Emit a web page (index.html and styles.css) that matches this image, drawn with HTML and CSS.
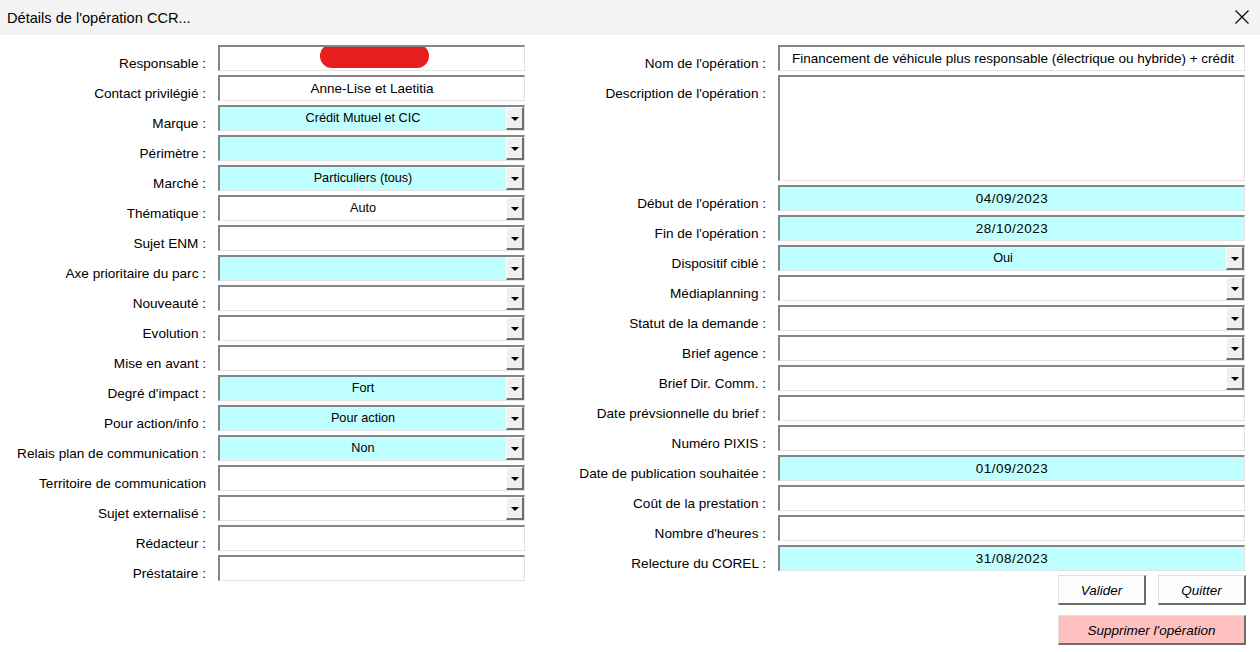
FILE: index.html
```html
<!DOCTYPE html>
<html lang="fr">
<head>
<meta charset="utf-8">
<title>Détails de l'opération CCR...</title>
<link rel="stylesheet" href="styles.css">
</head>
<body>
<div class="window">
  <div class="titlebar">
    <span class="title">Détails de l'opération CCR...</span>
    <svg class="close" width="14" height="14" viewBox="0 0 14 14"><path d="M0.5 0.5 L13.5 13.5 M13.5 0.5 L0.5 13.5" stroke="#000" stroke-width="1.1" fill="none"/></svg>
  </div>
  <div class="main">
    <div class="col col-left">
      <label class="lbl">Responsable :</label>
      <div class="field text"><span class="redact"></span></div>
      <label class="lbl">Contact privilégié :</label>
      <div class="field text"><span class="val">Anne-Lise et Laetitia</span></div>
      <label class="lbl">Marque :</label>
      <div class="field combo cyan"><span class="val">Crédit Mutuel et CIC</span><span class="arrow"></span></div>
      <label class="lbl">Périmètre :</label>
      <div class="field combo cyan"><span class="val"></span><span class="arrow"></span></div>
      <label class="lbl">Marché :</label>
      <div class="field combo cyan"><span class="val">Particuliers (tous)</span><span class="arrow"></span></div>
      <label class="lbl">Thématique :</label>
      <div class="field combo"><span class="val">Auto</span><span class="arrow"></span></div>
      <label class="lbl">Sujet ENM :</label>
      <div class="field combo"><span class="val"></span><span class="arrow"></span></div>
      <label class="lbl">Axe prioritaire du parc :</label>
      <div class="field combo cyan"><span class="val"></span><span class="arrow"></span></div>
      <label class="lbl">Nouveauté :</label>
      <div class="field combo"><span class="val"></span><span class="arrow"></span></div>
      <label class="lbl">Evolution :</label>
      <div class="field combo"><span class="val"></span><span class="arrow"></span></div>
      <label class="lbl">Mise en avant :</label>
      <div class="field combo"><span class="val"></span><span class="arrow"></span></div>
      <label class="lbl">Degré d'impact :</label>
      <div class="field combo cyan"><span class="val">Fort</span><span class="arrow"></span></div>
      <label class="lbl">Pour action/info :</label>
      <div class="field combo cyan"><span class="val">Pour action</span><span class="arrow"></span></div>
      <label class="lbl">Relais plan de communication :</label>
      <div class="field combo cyan"><span class="val">Non</span><span class="arrow"></span></div>
      <label class="lbl">Territoire de communication</label>
      <div class="field combo"><span class="val"></span><span class="arrow"></span></div>
      <label class="lbl">Sujet externalisé :</label>
      <div class="field combo"><span class="val"></span><span class="arrow"></span></div>
      <label class="lbl">Rédacteur :</label>
      <div class="field text"></div>
      <label class="lbl">Préstataire :</label>
      <div class="field text"></div>
    </div>
    <div class="col col-right">
      <label class="lbl">Nom de l'opération :</label>
      <div class="field text left"><span class="val">Financement de véhicule plus responsable (électrique ou hybride) + crédit</span></div>
      <label class="lbl">Description de l'opération :</label>
      <div class="field text area"></div>
      <label class="lbl">Début de l'opération :</label>
      <div class="field text cyan"><span class="val date">04/09/2023</span></div>
      <label class="lbl">Fin de l'opération :</label>
      <div class="field text cyan"><span class="val date">28/10/2023</span></div>
      <label class="lbl">Dispositif ciblé :</label>
      <div class="field combo cyan"><span class="val">Oui</span><span class="arrow"></span></div>
      <label class="lbl">Médiaplanning :</label>
      <div class="field combo"><span class="val"></span><span class="arrow"></span></div>
      <label class="lbl">Statut de la demande :</label>
      <div class="field combo"><span class="val"></span><span class="arrow"></span></div>
      <label class="lbl">Brief agence :</label>
      <div class="field combo"><span class="val"></span><span class="arrow"></span></div>
      <label class="lbl">Brief Dir. Comm. :</label>
      <div class="field combo"><span class="val"></span><span class="arrow"></span></div>
      <label class="lbl">Date prévsionnelle du brief :</label>
      <div class="field text"></div>
      <label class="lbl">Numéro PIXIS :</label>
      <div class="field text"></div>
      <label class="lbl">Date de publication souhaitée :</label>
      <div class="field text cyan"><span class="val date">01/09/2023</span></div>
      <label class="lbl">Coût de la prestation :</label>
      <div class="field text"></div>
      <label class="lbl">Nombre d'heures :</label>
      <div class="field text"></div>
      <label class="lbl">Relecture du COREL :</label>
      <div class="field text cyan"><span class="val date">31/08/2023</span></div>
      <div class="actions">
        <div class="btn-row">
          <button class="btn">Valider</button>
          <button class="btn">Quitter</button>
        </div>
        <button class="btn danger">Supprimer l'opération</button>
      </div>
    </div>
  </div>
</div>
</body>
</html>
```

FILE: styles.css
```css
html, body {
  margin: 0;
  padding: 0;
}

body {
  width: 1260px;
  height: 652px;
  overflow: hidden;
  background: #ffffff;
  color: #000000;
  font-family: "Liberation Sans", Arial, sans-serif;
}

.titlebar {
  height: 35px;
  background: #f3f3f3;
  display: flex;
  align-items: center;
  justify-content: space-between;
  padding: 0 11px 0 7px;
}

.title {
  font-size: 14.6px;
  color: #000;
}

.close {
  display: block;
  margin-top: -1px;
}

.main {
  display: flex;
  padding-top: 10px;
}

.col {
  display: grid;
  column-gap: 12px;
  row-gap: 4px;
  align-content: start;
}

.col-left {
  grid-template-columns: 206px 307px;
}

.col-right {
  grid-template-columns: 241px 467px;
}

.lbl {
  align-self: start;
  height: 15px;
  padding-top: 11px;
  line-height: 16px;
  font-size: 13.6px;
  text-align: right;
  white-space: nowrap;
  color: #000;
}

.field {
  position: relative;
  box-sizing: border-box;
  height: 26px;
  background: #ffffff;
  border-style: solid;
  border-width: 2px 1px 1px 2px;
  border-color: #858585 #e3e3e3 #e3e3e3 #858585;
  display: flex;
  align-items: center;
  overflow: hidden;
}

.field.cyan {
  background: #c0ffff;
}

.field .val {
  flex: 1;
  text-align: center;
  white-space: nowrap;
  overflow: hidden;
  font-size: 13.5px;
  line-height: 16px;
}

.field .val.date {
  letter-spacing: 0.5px;
}

.field.left .val {
  text-align: left;
  padding-left: 12px;
  overflow: hidden;
}

.field.area {
  height: 106px;
}

.combo {
  align-items: stretch;
}

.combo .val {
  font-size: 12.7px;
  line-height: 15px;
  display: flex;
  align-items: center;
  justify-content: center;
}

.combo .arrow {
  box-sizing: border-box;
  width: 18px;
  flex: none;
  background: #f0f0f0;
  border-style: solid;
  border-width: 1px 2px 2px 1px;
  border-color: #ffffff #6e6e6e #6e6e6e #ffffff;
  display: flex;
  align-items: center;
  justify-content: center;
}

.combo .arrow::after {
  content: "";
  width: 0;
  height: 0;
  border-left: 4px solid transparent;
  border-right: 4px solid transparent;
  border-top: 4px solid #000;
  margin-top: 1px;
}

.redact {
  position: absolute;
  left: 100px;
  top: -3px;
  width: 109px;
  height: 24px;
  border-radius: 12px;
  background: #e61e1e;
}

.actions {
  grid-column: 2;
  justify-self: end;
  margin-right: -1px;
  width: 188px;
  display: flex;
  flex-direction: column;
  gap: 10px;
}

.btn-row {
  display: flex;
  gap: 12px;
}

.btn {
  box-sizing: border-box;
  height: 30px;
  width: 88px;
  padding: 2px 0 0;
  margin: 0;
  background: #fdfdfd;
  border-style: solid;
  border-width: 1px 2px 2px 1px;
  border-color: #e3e3e3 #6e6e6e #6e6e6e #e3e3e3;
  font-family: "Liberation Sans", Arial, sans-serif;
  font-size: 13.5px;
  font-style: italic;
  color: #000;
}

.btn.danger {
  width: 188px;
  background: #ffc0c0;
}
```
